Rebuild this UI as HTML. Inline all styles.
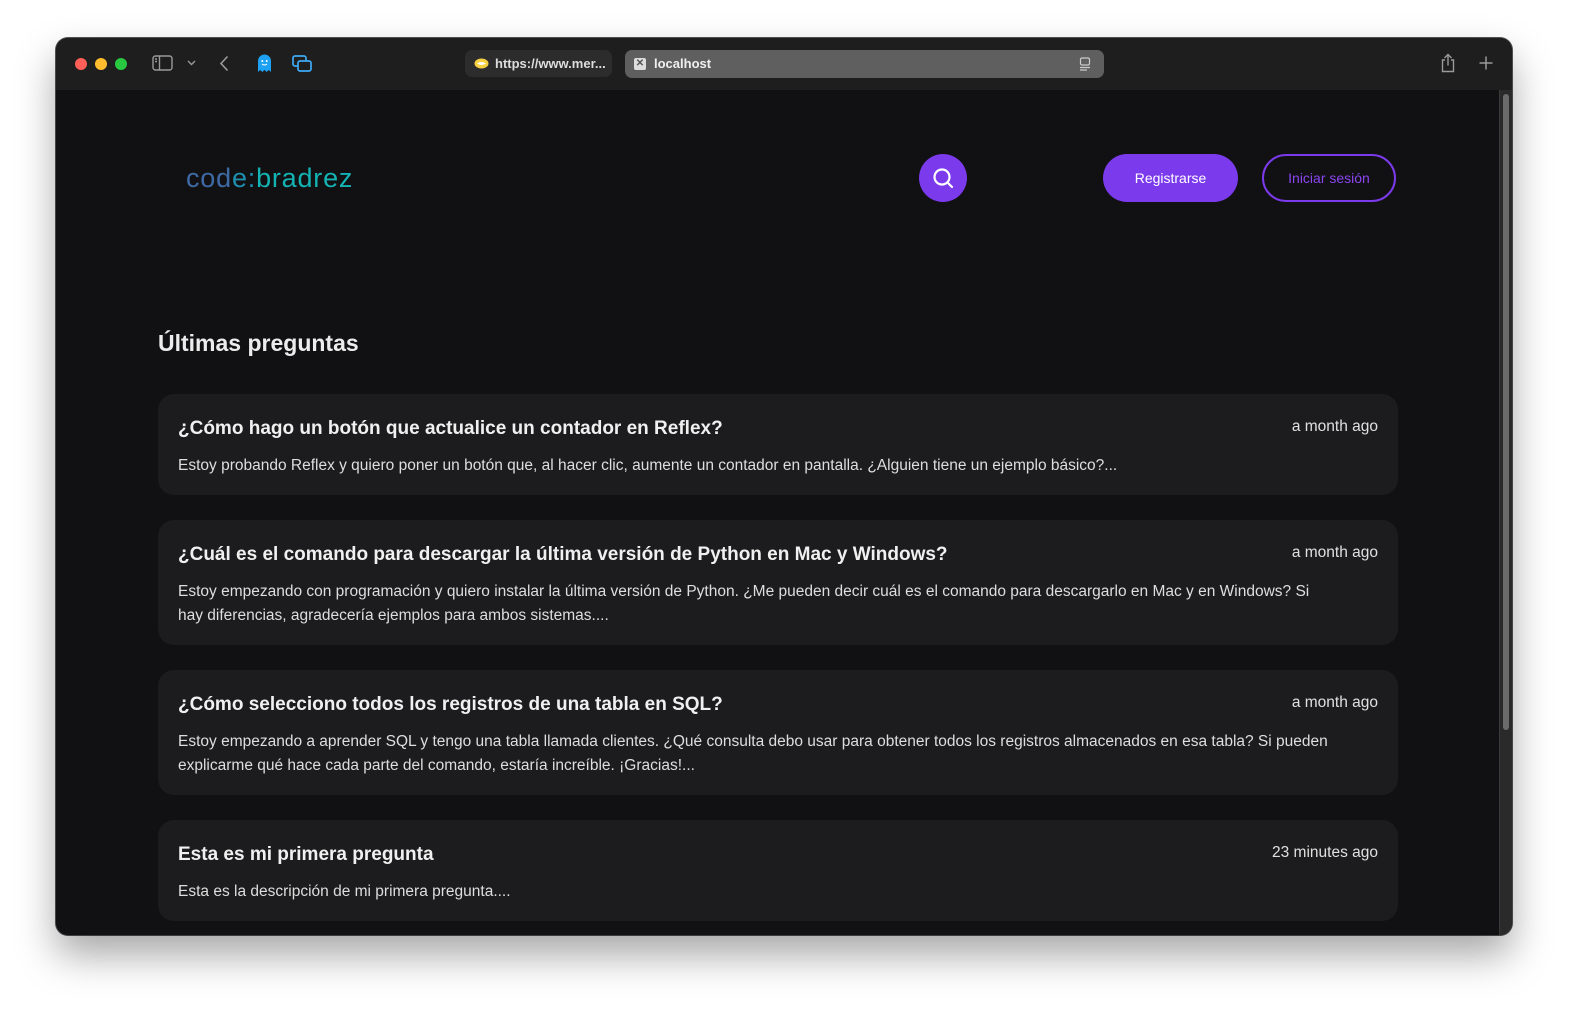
<!DOCTYPE html>
<html><head><meta charset="utf-8"><style>
*{margin:0;padding:0;box-sizing:border-box}
body{width:1570px;height:1010px;background:#fff;font-family:"Liberation Sans",sans-serif;position:relative;overflow:hidden}
.win{position:absolute;left:56px;top:38px;width:1456px;height:897px;border-radius:12px;background:#111113;overflow:hidden;box-shadow:0 20px 40px rgba(0,0,0,.35),0 0 0 1px #555}
.bar{position:absolute;left:0;top:0;width:100%;height:52px;background:#1e1e1e}
.dot{position:absolute;top:20px;width:12px;height:12px;border-radius:50%}
.tab1{position:absolute;left:409px;top:12px;width:147px;height:27px;border-radius:7px;background:#2c2c2c;color:#ddd;font-size:13px;font-weight:bold;line-height:27px;padding-left:30px}
.tab2{position:absolute;left:569px;top:12px;width:479px;height:28px;border-radius:7px;background:#5f5f5f;color:#f0f0f0;font-size:13px;font-weight:bold;line-height:28px;padding-left:29px}
.scroll{position:absolute;right:0;top:52px;width:13px;bottom:0;background:#2a2a2a;border-left:1px solid #3a3a3a}
.thumb{position:absolute;left:3px;top:4px;width:6px;height:636px;border-radius:3px;background:#6b6b6b}
.logo{position:absolute;left:130px;top:125px;font-size:27px;letter-spacing:.8px}
.sbtn{position:absolute;left:863px;top:116px;width:48px;height:48px;border-radius:50%;background:#7c3aed}
.reg{position:absolute;left:1047px;top:116px;width:135px;height:48px;border-radius:24px;background:#7c3aed;color:#fff;font-size:14px;text-align:center;line-height:48px}
.login{position:absolute;left:1206px;top:116px;width:134px;height:48px;border-radius:24px;border:2px solid #7c3aed;color:#8b45f0;font-size:14px;text-align:center;line-height:44px}
h2{position:absolute;left:102px;top:292px;font-size:23px;color:#ececec;font-weight:bold}
.card{position:absolute;left:102px;width:1240px;background:#1c1c1e;border-radius:16px;padding:23px 20px 20px}
.card h3{font-size:19px;color:#f0f0f0;font-weight:bold;line-height:26px;margin-top:-1px}
.card .t{position:absolute;right:20px;top:24px;font-size:15.5px;color:#e0e0e0}
.card p{font-size:15.5px;color:#dedede;line-height:24px;margin-top:12px;padding-right:20px}
</style></head><body>
<div class="win">
 <div class="bar">
  <div class="dot" style="left:19px;background:#fe5f57"></div>
  <div class="dot" style="left:39px;background:#febc2e"></div>
  <div class="dot" style="left:59px;background:#28c840"></div>
  <svg style="position:absolute;left:96px;top:17px" width="22" height="17" viewBox="0 0 22 17" fill="none" stroke="#9a9a9a" stroke-width="1.4"><rect x="1" y="1" width="19" height="14" rx="2.5"/><line x1="7.5" y1="1" x2="7.5" y2="15"/><line x1="3" y1="4" x2="5" y2="4"/><line x1="3" y1="6.5" x2="5" y2="6.5"/></svg>
  <svg style="position:absolute;left:131px;top:22px" width="9" height="6" viewBox="0 0 9 6" fill="none" stroke="#9a9a9a" stroke-width="1.4"><path d="M1 1l3.5 3.5L8 1"/></svg>
  <svg style="position:absolute;left:163px;top:17px" width="10" height="17" viewBox="0 0 10 17" fill="none" stroke="#9a9a9a" stroke-width="1.6"><path d="M8.5 1.5L2 8.5l6.5 7"/></svg>
  <svg style="position:absolute;left:201px;top:15px" width="15" height="20" viewBox="0 0 15 20"><path d="M1 8a6.5 6.5 0 0113 0v11l-2.2-2-2.1 2-2.2-2-2.2 2-2.1-2L1 19z" fill="#1da1f2"/><circle cx="5.3" cy="8" r="1" fill="#fff"/><circle cx="9.7" cy="8" r="1" fill="#fff"/><path d="M5 11q2.5 2 5 0" stroke="#fff" fill="none"/></svg>
  <svg style="position:absolute;left:236px;top:17px" width="21" height="17" viewBox="0 0 21 17" fill="none" stroke="#3fa9f5" stroke-width="1.7"><rect x="1" y="1" width="13" height="10" rx="2"/><rect x="6" y="6" width="13" height="10" rx="2" fill="#1e1e1e"/></svg>
  <div class="tab1"><svg style="position:absolute;left:9px;top:8px" width="15" height="11" viewBox="0 0 15 11"><ellipse cx="7.5" cy="5.5" rx="7" ry="5" fill="#f5d142"/><path d="M3 5.5q4.5-3 9 0q-4.5 3-9 0" fill="#fff"/></svg>https://www.mer...</div>
  <div class="tab2"><span style="position:absolute;left:9px;top:8px;width:12px;height:12px;border-radius:2px;background:#ddd;color:#555;font-size:10px;line-height:12px;text-align:center">✕</span>localhost
   <svg style="position:absolute;right:13px;top:7px" width="12" height="14" viewBox="0 0 12 14" fill="none" stroke="#ccc" stroke-width="1.2"><rect x="1.5" y="1" width="9" height="7" rx="1.5"/><line x1="1" y1="10.5" x2="11" y2="10.5"/><line x1="1" y1="13" x2="8" y2="13"/></svg></div>
  <svg style="position:absolute;left:1384px;top:15px" width="16" height="20" viewBox="0 0 16 20" fill="none" stroke="#9a9a9a" stroke-width="1.4"><path d="M5 7H2.5v11.5h11V7H11M8 12.5V1.5M4.5 5L8 1.5 11.5 5"/></svg>
  <svg style="position:absolute;left:1422px;top:17px" width="16" height="16" viewBox="0 0 16 16" stroke="#9a9a9a" stroke-width="1.5"><path d="M8 1.5v13M1.5 8h13"/></svg>
 </div>
 <div class="scroll"><div class="thumb"></div></div>
 <div class="logo"><span style="color:#3e6aa6">cod</span><span style="color:#1f8fb0">e:</span><span style="color:#14b3b3">bradrez</span></div>
 <div class="sbtn"><svg style="position:absolute;left:13px;top:13px" width="22" height="22" viewBox="0 0 22 22" fill="none" stroke="#fff" stroke-width="2.2"><circle cx="10" cy="10" r="7.5"/><path d="M15.5 15.5L20 20" stroke-linecap="round"/></svg></div>
 <div class="reg">Registrarse</div>
 <div class="login">Iniciar sesión</div>
 <h2>Últimas preguntas</h2>
 <div class="card" style="top:356px;height:101px"><h3>¿Cómo hago un botón que actualice un contador en Reflex?</h3><span class="t">a month ago</span><p>Estoy probando Reflex y quiero poner un botón que, al hacer clic, aumente un contador en pantalla. ¿Alguien tiene un ejemplo básico?...</p></div>
 <div class="card" style="top:482px;height:125px"><h3>¿Cuál es el comando para descargar la última versión de Python en Mac y Windows?</h3><span class="t">a month ago</span><p>Estoy empezando con programación y quiero instalar la última versión de Python. ¿Me pueden decir cuál es el comando para descargarlo en Mac y en Windows? Si<br>hay diferencias, agradecería ejemplos para ambos sistemas....</p></div>
 <div class="card" style="top:632px;height:125px"><h3>¿Cómo selecciono todos los registros de una tabla en SQL?</h3><span class="t">a month ago</span><p>Estoy empezando a aprender SQL y tengo una tabla llamada clientes. ¿Qué consulta debo usar para obtener todos los registros almacenados en esa tabla? Si pueden explicarme qué hace cada parte del comando, estaría increíble. ¡Gracias!...</p></div>
 <div class="card" style="top:782px;height:101px"><h3>Esta es mi primera pregunta</h3><span class="t">23 minutes ago</span><p>Esta es la descripción de mi primera pregunta....</p></div>
</div>
</body></html>
